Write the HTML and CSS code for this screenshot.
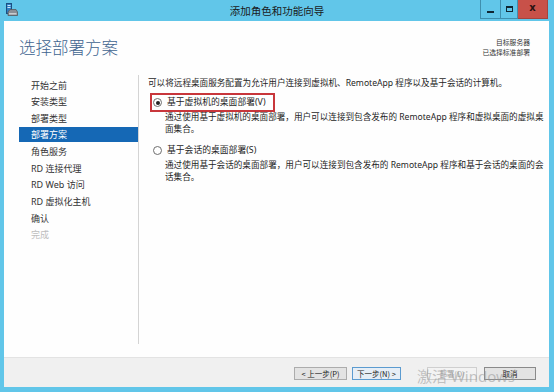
FILE: index.html
```html
<!DOCTYPE html>
<html lang="zh-CN">
<head>
<meta charset="utf-8">
<title>添加角色和功能向导</title>
<link rel="stylesheet" href="styles.css">
</head>
<body>
<div class="window">
  <div class="titlebar">
    <div class="tb-left">
      <svg class="app-icon" width="12" height="14" viewBox="0 0 12 14">
        <rect x="0.5" y="0.5" width="5" height="10" fill="#2d7fc4" stroke="#1b4f80"/>
        <rect x="1.5" y="2" width="3" height="1" fill="#cfe6f8"/>
        <rect x="1.5" y="4" width="3" height="1" fill="#cfe6f8"/>
        <path d="M2 9 L4 6.5 H10 L11.5 9 V12.5 H2 Z" fill="#8a8f96" stroke="#55595e" stroke-width="0.8"/>
        <rect x="3" y="10" width="7.5" height="1.5" fill="#c9ccd0"/>
      </svg>
    </div>
    <div class="tb-title">添加角色和功能向导</div>
    <div class="tb-right">
      <div class="ctl ctl-min"><span class="min-bar"></span></div>
      <div class="ctl ctl-max"><span class="max-box"></span></div>
      <div class="ctl ctl-close">x</div>
    </div>
  </div>

  <div class="client">
    <div class="header">
      <h1 class="page-title">选择部署方案</h1>
      <div class="dest">
        <div>目标服务器</div>
        <div>已选择标准部署</div>
      </div>
    </div>

    <div class="body">
      <ul class="nav">
        <li class="nav-item">开始之前</li>
        <li class="nav-item">安装类型</li>
        <li class="nav-item">部署类型</li>
        <li class="nav-item active">部署方案</li>
        <li class="nav-item">角色服务</li>
        <li class="nav-item">RD 连接代理</li>
        <li class="nav-item">RD Web 访问</li>
        <li class="nav-item">RD 虚拟化主机</li>
        <li class="nav-item">确认</li>
        <li class="nav-item disabled">完成</li>
      </ul>

      <div class="content">
        <p class="intro">可以将远程桌面服务配置为允许用户连接到虚拟机、RemoteApp 程序以及基于会话的计算机。</p>

        <div class="option marked">
          <span class="radio checked"></span>
          <span class="opt-label">基于虚拟机的桌面部署(V)</span>
        </div>
        <p class="desc">通过使用基于虚拟机的桌面部署，用户可以连接到包含发布的 RemoteApp 程序和虚拟桌面的虚拟桌面集合。</p>

        <div class="option second">
          <span class="radio"></span>
          <span class="opt-label">基于会话的桌面部署(S)</span>
        </div>
        <p class="desc">通过使用基于会话的桌面部署，用户可以连接到包含发布的 RemoteApp 程序和基于会话的桌面的会话集合。</p>
      </div>
    </div>

    <div class="footer">
      <button class="btn btn-prev">&lt; 上一步(P)</button>
      <button class="btn btn-next">下一步(N) &gt;</button>
      <button class="btn btn-deploy" disabled>部署(D)</button>
      <button class="btn btn-cancel">取消</button>
      <div class="watermark">激活 Windows</div>
    </div>
  </div>
</div>
</body>
</html>
```

FILE: styles.css
```css
* { box-sizing: border-box; }

html, body {
  margin: 0;
  padding: 0;
}

body {
  width: 554px;
  height: 392px;
  background: #61c6e9;
  font-family: "Noto Sans", "Noto Sans CJK SC", sans-serif;
  color: #1e1e1e;
  overflow: hidden;
}

.window {
  width: 554px;
  height: 392px;
  display: flex;
  flex-direction: column;
  padding: 0 5px 5px 4px;
}

/* title bar */
.titlebar {
  height: 21px;
  flex: none;
  display: grid;
  grid-template-columns: 1fr auto 1fr;
  align-items: start;
  margin-left: -4px;
  margin-right: -5px;
}

.tb-left {
  padding: 3px 0 0 6px;
}

.app-icon { display: block; }

.tb-title {
  font-size: 10.5px;
  line-height: 21px;
  color: #1a1a1a;
  font-family: "Noto Sans CJK SC", sans-serif;
}

.tb-right {
  display: flex;
  justify-content: flex-end;
  padding-right: 6px;
}

.ctl {
  height: 19px;
  border: 1px solid #3f8fae;
  border-top: none;
  display: flex;
  align-items: center;
  justify-content: center;
}

.ctl-min { width: 21px; }
.ctl-max { width: 17px; border-left: none; }
.ctl-close {
  width: 30px;
  border-left: none;
  background: #c85149;
  border-color: #a4443e;
  font-family: "DejaVu Sans", sans-serif;
  font-weight: bold;
  font-size: 10px;
  line-height: 1;
  color: #2a1212;
  padding-bottom: 2px;
}

.min-bar {
  width: 7px;
  height: 2px;
  background: #102733;
  margin-top: 5px;
}

.max-box {
  width: 7px;
  height: 6px;
  border: 1.5px solid #102733;
  border-top-width: 2px;
}

/* client area */
.client {
  flex: 1;
  background: #fefefe;
  display: flex;
  flex-direction: column;
  font-family: "Noto Sans", "Noto Sans CJK SC", sans-serif;
  position: relative;
}

.header {
  height: 54px;
  flex: none;
  display: flex;
  justify-content: space-between;
  padding: 15px 19px 0 15px;
}

.page-title {
  margin: 0;
  font-family: "Noto Sans CJK SC", sans-serif;
  font-weight: 300;
  font-size: 16.5px;
  line-height: 22px;
  color: #40648f;
}

.dest {
  text-align: right;
  font-size: 6.8px;
  line-height: 9.5px;
  color: #333;
  padding-top: 2px;
  font-family: "Noto Sans CJK SC", sans-serif;
}

.body {
  flex: 1;
  display: flex;
  padding-bottom: 13px;
  border-bottom: 1px solid #e3e3e3;
}

.nav {
  list-style: none;
  margin: 0 0 0 15px;
  padding: 2.5px 0 0 0;
  width: 120px;
  border-right: 1px solid #d4d4d4;
  display: flex;
  flex-direction: column;
  gap: 1.67px;
  font-size: 9px;
}

.nav-item {
  height: 15px;
  line-height: 15px;
  padding-left: 12px;
  color: #333;
  white-space: nowrap;
}

.nav-item.active {
  background: #1568b5;
  color: #fff;
}

.nav-item.disabled { color: #bdbdbd; }

.content {
  flex: 1;
  padding: 1.5px 1px 0 9px;
  font-size: 8.6px;
}

.intro {
  margin: 0;
  line-height: 13px;
  white-space: nowrap;
}

.option {
  display: flex;
  align-items: center;
  gap: 5px;
  width: fit-content;
  height: 19px;
  margin-left: 2px;
  padding: 0 7px 0 1px;
  border: 2px solid transparent;
  font-size: 8.8px;
}

.option.marked {
  margin-top: 3.5px;
  border-color: #c8363b;
}

.option.second { margin-top: 5.5px; }

.radio {
  width: 9px;
  height: 9px;
  border-radius: 50%;
  border: 1px solid #6e6e6e;
  background: #fff;
  display: flex;
  align-items: center;
  justify-content: center;
  flex: none;
}

.radio.checked::after {
  content: "";
  width: 4px;
  height: 4px;
  border-radius: 50%;
  background: #222;
}

.opt-label { line-height: 15px; white-space: nowrap; }

.desc {
  margin: 0 0 0 17px;
  line-height: 11.7px;
}

/* footer */
.footer {
  height: 29px;
  flex: none;
  background: #f0f0f0;
  display: flex;
  align-items: center;
  padding: 2px 13px 0 290px;
  position: relative;
}

.btn {
  height: 13px;
  padding: 0;
  font-family: "Noto Sans CJK SC", sans-serif;
  font-size: 7.5px;
  line-height: 11px;
  color: #222;
  background: #e3e3e3;
  border: 1px solid #acacac;
}

.btn-prev { width: 53px; }
.btn-next { width: 49px; margin-left: 5px; border-color: #5b9bd0; background: #e6eef6; }
.btn-deploy { width: 50px; margin-left: 26px; color: #a6a6a6; background: #f3f3f3; border-color: #cfcfcf; }
.btn-cancel { width: 52px; margin-left: 7px; border-color: #8a8a8a; }

.watermark {
  position: absolute;
  left: 413px;
  top: 9px;
  font-family: "Noto Sans", "Noto Sans CJK SC", sans-serif;
  font-size: 15px;
  line-height: 18px;
  color: rgba(150, 150, 150, 0.55);
  white-space: nowrap;
  pointer-events: none;
}
```
